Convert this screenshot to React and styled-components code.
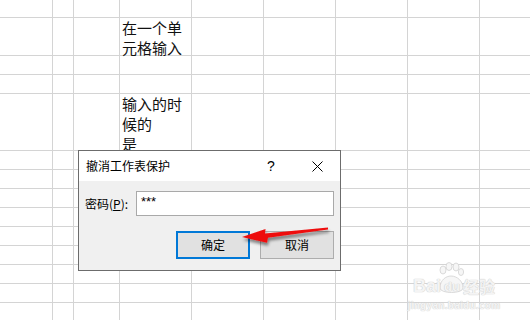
import React from "react";
import styled, { createGlobalStyle } from "styled-components";

const Global = createGlobalStyle`
  html, body { margin: 0; padding: 0; background: #fff; overflow: hidden; }
  #root { width: 530px; height: 320px; }
`;

const Page = styled.div`
  position: relative;
  width: 530px;
  height: 320px;
  overflow: hidden;
  background: #fff;
`;

const Sheet = styled.div`
  display: grid;
  grid-template-columns: 53px 21px 46px 72px 72px 72px 72px 72px 1fr;
  grid-template-rows: 18px 38px 19px 19px 57px repeat(9, 19px);
  width: 530px;
`;

const Cell = styled.div`
  box-sizing: border-box;
  border-bottom: 1px solid #d4d4d4;
  border-right: ${(p) => (p.$last ? "none" : "1px solid #d4d4d4")};
  overflow: visible;
  padding: 0 0 0 2px;
  font-family: "Noto Sans CJK SC", "Noto Sans", sans-serif;
  font-size: 15px;
  line-height: 20px;
  color: #111;
  white-space: nowrap;
`;

const CellLine = styled.div`
  height: ${(p) => (p.$short ? "16px" : "20px")};
  line-height: 20px;
`;

const Dialog = styled.div`
  position: absolute;
  left: 78px;
  top: 150px;
  width: 263px;
  height: 121px;
  box-sizing: border-box;
  border: 1px solid #6c6c6c;
  background: #f0f0f0;
  display: flex;
  flex-direction: column;
  font-family: "Noto Sans CJK SC", "Noto Sans", sans-serif;
  font-size: 12px;
  color: #000;
`;

const TitleBar = styled.div`
  height: 30px;
  background: #fff;
  display: flex;
  align-items: center;
  padding-left: 7px;
`;

const Title = styled.div`
  flex: 1;
  line-height: 16px;
`;

const CaptionButton = styled.div`
  width: 46px;
  height: 30px;
  display: flex;
  align-items: center;
  justify-content: center;
  font-family: "Liberation Sans", sans-serif;
  font-size: 14px;
`;

const Body = styled.div`
  flex: 1;
  padding: 10px 6px 0 6px;
  display: flex;
  flex-direction: column;
`;

const FieldRow = styled.div`
  display: flex;
  align-items: center;
`;

const Label = styled.div`
  width: 51px;
  line-height: 16px;
`;

const Input = styled.div`
  box-sizing: border-box;
  width: 198px;
  height: 25px;
  background: #fff;
  border: 1px solid #a9a9a9;
  padding: 2px 0 0 4px;
  font-family: "Liberation Sans", sans-serif;
  font-size: 13px;
  line-height: 16px;
`;

const ButtonRow = styled.div`
  display: flex;
  justify-content: flex-end;
  gap: 10px;
  margin-top: 15px;
`;

const Button = styled.div`
  box-sizing: border-box;
  width: 74px;
  height: 28px;
  background: #e1e1e1;
  border: ${(p) => (p.$default ? "2px solid #0078d7" : "1px solid #adadad")};
  display: flex;
  align-items: center;
  justify-content: center;
  line-height: 16px;
`;

const Overlay = styled.svg`
  position: absolute;
  left: 0;
  top: 0;
  pointer-events: none;
`;

const Watermark = styled.div`
  position: absolute;
  left: 404px;
  top: 262px;
  width: 100px;
  display: flex;
  flex-direction: column;
  align-items: center;
  color: #f4f4f4;
  font-family: "Liberation Sans", sans-serif;
  pointer-events: none;
`;

const WmLogo = styled.svg`
  position: absolute;
  left: 32px;
  top: 0;
`;

const WmMain = styled.div`
  position: relative;
  display: flex;
  align-items: flex-end;
  margin-top: 15px;
  font-size: 18px;
  font-weight: bold;
  line-height: 18px;
  text-shadow: 0 0 1px #cbcbcb, 0 0 1px #cbcbcb;
  gap: 3px;
`;

const WmDu = styled.span`
  font-size: 13px;
  line-height: 16px;
`;

const WmCn = styled.span`
  font-family: "Noto Sans CJK SC", sans-serif;
  font-size: 16px;
`;

const WmSub = styled.div`
  font-size: 10px;
  font-weight: bold;
  line-height: 12px;
  margin-top: 5px;
  letter-spacing: 0.3px;
  text-shadow: 0 0 1px #cfcfcf, 0 0 1px #cfcfcf;
`;

const cols = 9;
const rows = 14;

const cellText = {
  "1-3": ["在一个单", "元格输入"],
  "4-3": ["输入的时", "候的", "是"],
};

export default function App() {
  const cells = [];
  for (let r = 0; r < rows; r++) {
    for (let c = 0; c < cols; c++) {
      const t = cellText[`${r}-${c}`];
      cells.push(
        <Cell key={`${r}-${c}`} $last={c === cols - 1}>
          {t &&
            t.map((line, i) => (
              <CellLine key={i} $short={i === t.length - 1}>
                {line}
              </CellLine>
            ))}
        </Cell>
      );
    }
  }
  return (
    <Page>
      <Global />
      <Sheet>{cells}</Sheet>
      <Watermark>
        <WmLogo width="30" height="34" viewBox="0 0 30 34">
          <g fill="#f6f6f6" stroke="#d2d2d2" strokeWidth="0.8">
            <ellipse cx="7" cy="8" rx="3" ry="4" />
            <ellipse cx="13" cy="4.5" rx="3" ry="4" />
            <ellipse cx="20" cy="5" rx="3" ry="4" />
            <ellipse cx="25" cy="10" rx="2.6" ry="3.5" />
            <path d="M4 26 C4 18 10 14 15 14 C21 14 27 19 27 26 C27 32 4 32 4 26 Z" />
          </g>
        </WmLogo>
        <WmMain>
          <span>Bai</span>
          <WmDu>du</WmDu>
          <WmCn>经验</WmCn>
        </WmMain>
        <WmSub>jingyan.baidu.com</WmSub>
      </Watermark>
      <Dialog>
        <TitleBar>
          <Title>撤消工作表保护</Title>
          <CaptionButton>?</CaptionButton>
          <CaptionButton>
            <svg width="11" height="11" viewBox="0 0 11 11">
              <path d="M0.5 0.5 L10.5 10.5 M10.5 0.5 L0.5 10.5" stroke="#000" strokeWidth="1" fill="none" />
            </svg>
          </CaptionButton>
        </TitleBar>
        <Body>
          <FieldRow>
            <Label>
              密码(<u>P</u>):
            </Label>
            <Input>***</Input>
          </FieldRow>
          <ButtonRow>
            <Button $default>确定</Button>
            <Button>取消</Button>
          </ButtonRow>
        </Body>
      </Dialog>
      <Overlay width="530" height="320" viewBox="0 0 530 320">
        <defs>
          <filter id="sh" x="-20%" y="-50%" width="140%" height="250%">
            <feDropShadow dx="1" dy="3" stdDeviation="1.6" floodColor="#000" floodOpacity="0.45" />
          </filter>
        </defs>
        <polygon
          points="242,237 265.5,229 265,233.5 328,227.6 328,229.6 268,237.8 267,242.8"
          fill="#ee1111"
          filter="url(#sh)"
        />
      </Overlay>
    </Page>
  );
}
